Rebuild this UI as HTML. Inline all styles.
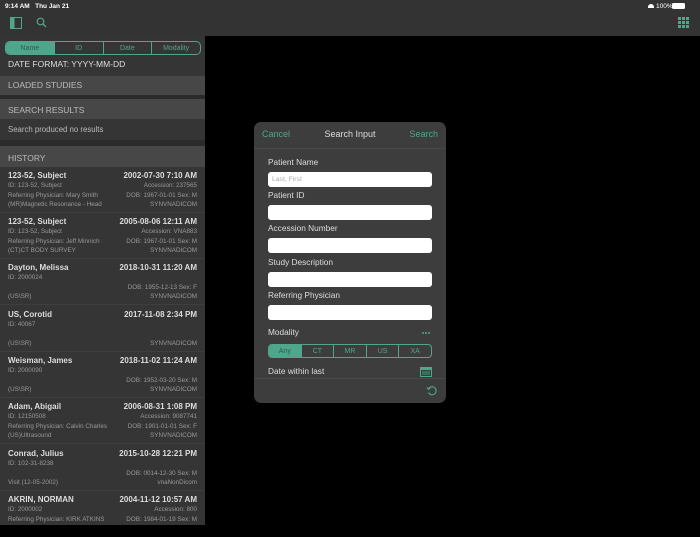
<!DOCTYPE html>
<html><head><style>
*{margin:0;padding:0;box-sizing:border-box}
body{width:700px;height:525px;background:#000;font-family:"Liberation Sans",sans-serif;position:relative;overflow:hidden;color:#ddd}
.abs{position:absolute}
.top{left:0;top:0;width:700px;height:36px;background:#333}
.panel{left:0;top:36px;width:205px;height:489px;background:#353535}
.seg{display:flex;border:1px solid #4fa68a;border-radius:5px;overflow:hidden;height:14px}
.seg div{flex:1;font-size:7px;color:#4fa68a;display:flex;align-items:center;justify-content:center;border-left:1px solid #4fa68a}
.seg div:first-child{border-left:none;background:#4fa68a;color:#2c5c4c}
.hdr{left:0;width:205px;background:#474747;font-size:8.5px;color:#bbb;padding-left:8px}
.row{left:0;width:205px;height:46px;border-bottom:1px solid #3f3f3f;font-size:6.3px;color:#999}
.row .n{position:absolute;left:8px;top:4px;font-size:8px;color:#ddd;font-weight:bold}
.row .d{position:absolute;right:8px;top:4px;font-size:8px;color:#ddd;font-weight:bold}
.row .l{position:absolute;left:8px}
.row .r{position:absolute;right:8px}
.modal{left:254px;top:122px;width:192px;height:281px;background:#3d3d3d;border-radius:7px}
.lbl{position:absolute;left:14px;font-size:8.3px;color:#ddd}
.inp{position:absolute;left:14px;width:164px;height:15px;background:#fff;border-radius:3px;font-size:6.8px;color:#aaa;padding-left:4px;line-height:15px}
.dot{position:absolute;width:2px;height:2px;background:#4fa68a;border-radius:1px}
</style></head><body>
<div class="abs top"></div>
<div class="abs" style="left:5px;top:3px;font-size:6.5px;color:#fff;font-weight:bold">9:14 AM&nbsp;&nbsp;&nbsp;Thu Jan 21</div>
<div class="abs" style="left:656px;top:3px;font-size:6.5px;color:#fff">100%</div>
<div class="abs" style="left:648px;top:4px;width:6px;height:4px;border-radius:3px 3px 0 0;background:#fff"></div>
<div class="abs" style="left:672px;top:3px;width:13px;height:6px;background:#fff;border-radius:1.5px"></div>
<svg class="abs" style="left:10px;top:17px" width="12" height="12"><rect x="0.5" y="0.5" width="11" height="11" fill="none" stroke="#4fa68a"/><rect x="0.5" y="0.5" width="4" height="11" fill="#4fa68a"/></svg>
<svg class="abs" style="left:36px;top:17px" width="11" height="11"><circle cx="4.5" cy="4.5" r="3.3" fill="none" stroke="#4fa68a" stroke-width="1.2"/><line x1="7" y1="7" x2="10" y2="10" stroke="#4fa68a" stroke-width="1.3"/></svg>
<svg class="abs" style="left:678px;top:17px" width="11" height="11" fill="#4fa68a"><rect x="0" y="0" width="3" height="3"/><rect x="4" y="0" width="3" height="3"/><rect x="8" y="0" width="3" height="3"/><rect x="0" y="4" width="3" height="3"/><rect x="4" y="4" width="3" height="3"/><rect x="8" y="4" width="3" height="3"/><rect x="0" y="8" width="3" height="3"/><rect x="4" y="8" width="3" height="3"/><rect x="8" y="8" width="3" height="3"/></svg>
<div class="abs panel"></div>
<div class="abs seg" style="left:5px;top:41px;width:196px"><div>Name</div><div>ID</div><div>Date</div><div>Modality</div></div>
<div class="abs" style="left:8px;top:59px;font-size:8.5px;color:#ddd">DATE FORMAT: YYYY-MM-DD</div>
<div class="abs hdr" style="top:76px;height:19px;line-height:19px">LOADED STUDIES</div>
<div class="abs" style="left:0;top:95px;width:205px;height:4px;background:#2b2b2b"></div>
<div class="abs hdr" style="top:99px;height:20px;line-height:22px">SEARCH RESULTS</div>
<div class="abs" style="left:8px;top:125px;font-size:7.8px;color:#bbb">Search produced no results</div>
<div class="abs" style="left:0;top:140px;width:205px;height:6px;background:#2b2b2b"></div>
<div class="abs hdr" style="top:146px;height:21px;line-height:25px">HISTORY</div>

<div class="abs row" style="top:167px"><span class="n">123-52, Subject</span><span class="d">2002-07-30 7:10 AM</span><span class="l" style="top:15px">ID: 123-52, Subject</span><span class="r" style="top:15px">Accession: 237565</span><span class="l" style="top:25px">Referring Physician: Mary Smith</span><span class="r" style="top:25px">DOB: 1967-01-01 Sex: M</span><span class="l" style="top:34px">(MR)Magnetic Resonance - Head</span><span class="r" style="top:34px">SYNVNADICOM</span></div>
<div class="abs row" style="top:213px"><span class="n">123-52, Subject</span><span class="d">2005-08-06 12:11 AM</span><span class="l" style="top:15px">ID: 123-52, Subject</span><span class="r" style="top:15px">Accession: VNA883</span><span class="l" style="top:25px">Referring Physician: Jeff Minnich</span><span class="r" style="top:25px">DOB: 1967-01-01 Sex: M</span><span class="l" style="top:34px">(CT)CT BODY SURVEY</span><span class="r" style="top:34px">SYNVNADICOM</span></div>
<div class="abs row" style="top:259px"><span class="n">Dayton, Melissa</span><span class="d">2018-10-31 11:20 AM</span><span class="l" style="top:15px">ID: 2000024</span><span class="r" style="top:25px">DOB: 1955-12-13 Sex: F</span><span class="l" style="top:34px">(US\SR)</span><span class="r" style="top:34px">SYNVNADICOM</span></div>
<div class="abs row" style="top:306px"><span class="n">US, Corotid</span><span class="d">2017-11-08 2:34 PM</span><span class="l" style="top:15px">ID: 40067</span><span class="l" style="top:34px">(US\SR)</span><span class="r" style="top:34px">SYNVNADICOM</span></div>
<div class="abs row" style="top:352px"><span class="n">Weisman, James</span><span class="d">2018-11-02 11:24 AM</span><span class="l" style="top:15px">ID: 2000090</span><span class="r" style="top:25px">DOB: 1952-03-20 Sex: M</span><span class="l" style="top:34px">(US\SR)</span><span class="r" style="top:34px">SYNVNADICOM</span></div>
<div class="abs row" style="top:398px"><span class="n">Adam, Abigail</span><span class="d">2006-08-31 1:08 PM</span><span class="l" style="top:15px">ID: 12150508</span><span class="r" style="top:15px">Accession: 9087741</span><span class="l" style="top:25px">Referring Physician: Calvin Charles</span><span class="r" style="top:25px">DOB: 1901-01-01 Sex: F</span><span class="l" style="top:34px">(US)Ultrasound</span><span class="r" style="top:34px">SYNVNADICOM</span></div>
<div class="abs row" style="top:445px"><span class="n">Conrad, Julius</span><span class="d">2015-10-28 12:21 PM</span><span class="l" style="top:15px">ID: 102-31-8238</span><span class="r" style="top:25px">DOB: 0014-12-30 Sex: M</span><span class="l" style="top:34px">Visit (12-05-2002)</span><span class="r" style="top:34px">vnaNonDicom</span></div>
<div class="abs row" style="top:491px;border:none"><span class="n">AKRIN, NORMAN</span><span class="d">2004-11-12 10:57 AM</span><span class="l" style="top:15px">ID: 2000002</span><span class="r" style="top:15px">Accession: 800</span><span class="l" style="top:25px">Referring Physician: KIRK ATKINS</span><span class="r" style="top:25px">DOB: 1984-01-19 Sex: M</span></div>

<div class="abs modal">
<div class="abs" style="left:8px;top:7px;font-size:9px;color:#4fa68a">Cancel</div>
<div class="abs" style="left:0;width:192px;text-align:center;top:7px;font-size:9px;color:#ddd">Search Input</div>
<div class="abs" style="right:8px;top:7px;font-size:9px;color:#4fa68a">Search</div>
<div class="abs" style="left:0;top:26px;width:192px;height:1px;background:#4a4a4a"></div>
<div class="lbl" style="top:35px">Patient Name</div><div class="inp" style="top:50px">Last, First</div>
<div class="lbl" style="top:68px">Patient ID</div><div class="inp" style="top:83px"></div>
<div class="lbl" style="top:101px">Accession Number</div><div class="inp" style="top:116px"></div>
<div class="lbl" style="top:135px">Study Description</div><div class="inp" style="top:150px"></div>
<div class="lbl" style="top:168px">Referring Physician</div><div class="inp" style="top:183px"></div>
<div class="lbl" style="top:205px">Modality</div>
<div class="dot" style="left:168px;top:210px"></div><div class="dot" style="left:171px;top:210px"></div><div class="dot" style="left:174px;top:210px"></div>
<div class="abs seg" style="left:14px;top:222px;width:164px;height:14px;border-radius:4px"><div>Any</div><div>CT</div><div>MR</div><div>US</div><div>XA</div></div>
<div class="lbl" style="top:244px">Date within last</div>
<svg class="abs" style="left:166px;top:244px" width="12" height="11"><rect x="0.5" y="1.5" width="11" height="9" fill="none" stroke="#4fa68a"/><rect x="0.5" y="1.5" width="11" height="2.5" fill="#4fa68a"/><rect x="2" y="5" width="8" height="4" fill="#3f6b5c"/></svg>
<div class="abs" style="left:0;top:256px;width:192px;height:1px;background:#4a4a4a"></div>
<svg class="abs" style="left:172px;top:263px" width="11" height="11"><path d="M2.5 4 A4 4 0 1 1 2.5 7.5" fill="none" stroke="#4fa68a" stroke-width="1.1"/><path d="M0.8 2.5 L2.8 4.5 L4.5 2.3" fill="none" stroke="#4fa68a" stroke-width="1"/></svg>
</div>
</body></html>
